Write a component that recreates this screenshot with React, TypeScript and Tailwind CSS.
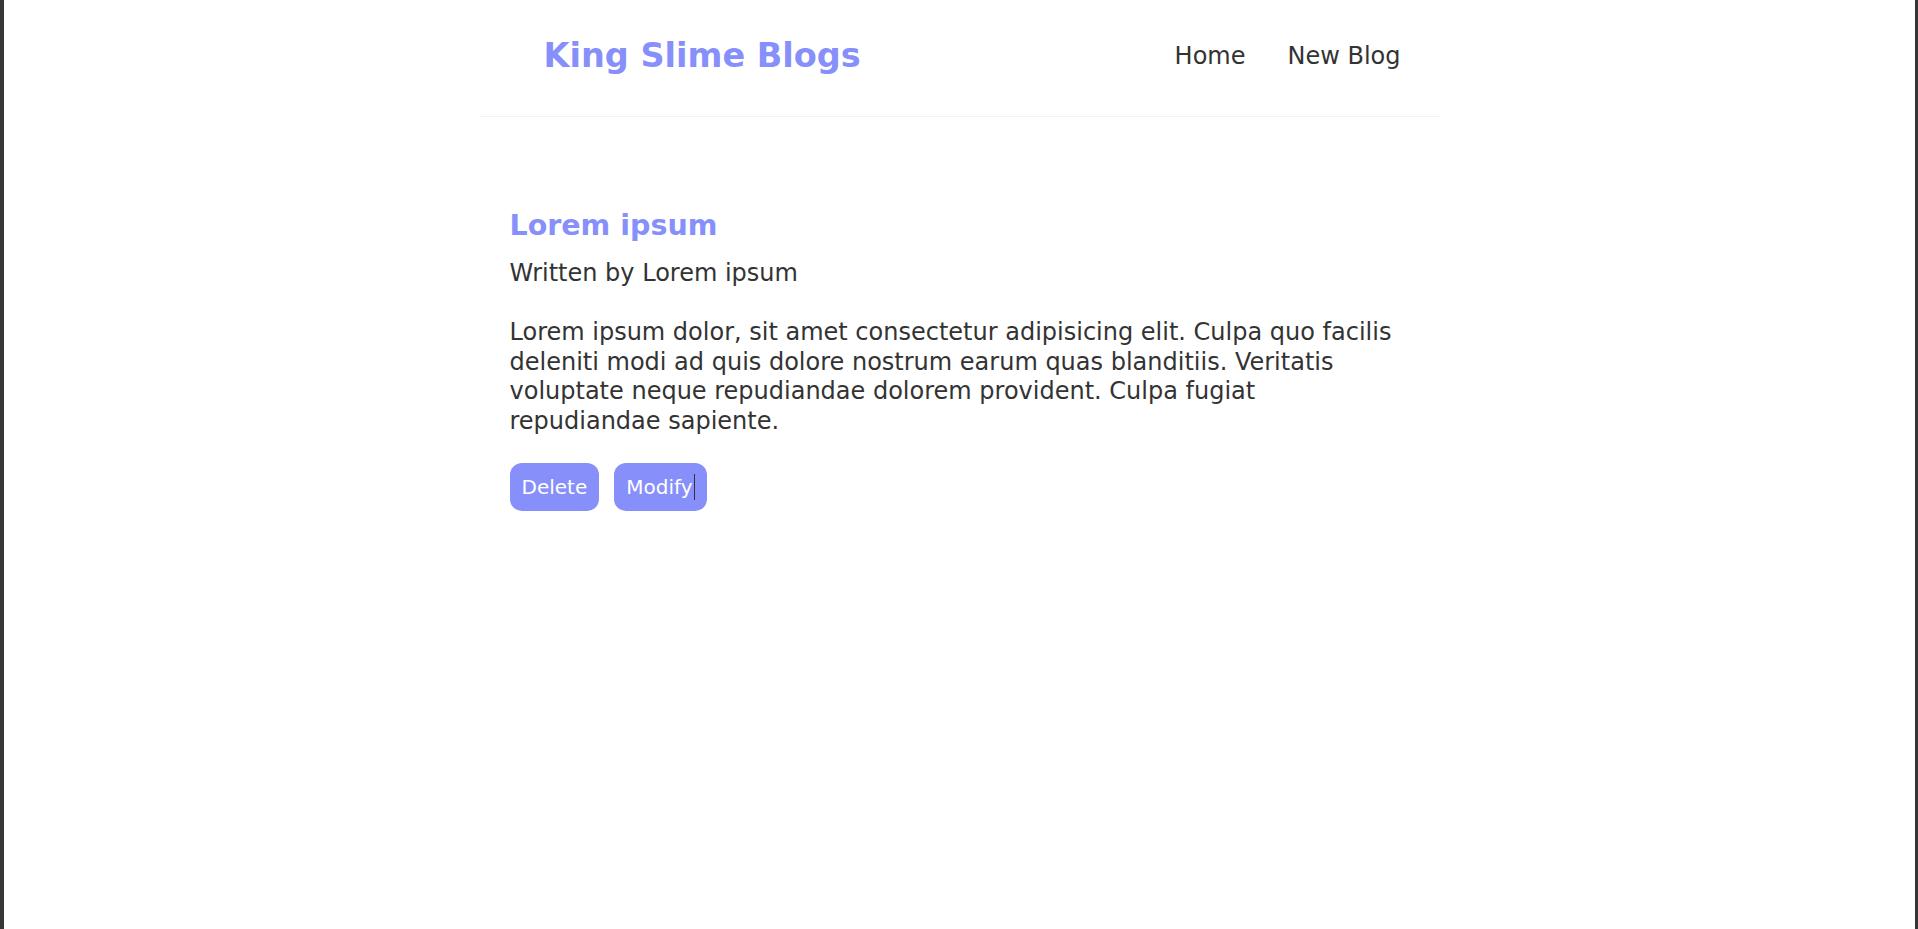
export default function App() {
  return (
    <div
      className="h-screen bg-white border-l-4 border-r-[3px] border-[#363636] text-[#333]"
      style={{ fontFamily: "'DejaVu Sans', Inter, sans-serif" }}
    >
      <nav className="mx-auto w-[960px] h-[117px] pb-[5px] flex items-center justify-between px-[30px] border-b border-[#f2f2f2]">
        <h1 className="ml-[34px] text-[33.5px] font-bold text-[#878ffa] leading-none">
          King Slime Blogs
        </h1>
        <div className="flex items-center">
          <a href="/" className="ml-[24px] px-[9px] text-[24px] text-[#333]">
            Home
          </a>
          <a href="/create" className="ml-[24px] px-[9px] text-[24px] text-[#333]">
            New Blog
          </a>
        </div>
      </nav>

      <div className="mx-auto w-[960px] px-[30px] pt-[91px]">
        <article>
          <h2 className="text-[28.5px] leading-[36px] font-bold text-[#878ffa] mb-[15px]">
            Lorem ipsum
          </h2>
          <p className="text-[24px] leading-[29px]">Written by Lorem ipsum</p>
          <div className="mt-[30px] mb-[27px] text-[24px] leading-[29.5px]">
            Lorem ipsum dolor, sit amet consectetur adipisicing elit. Culpa quo facilis
            <br />
            deleniti modi ad quis dolore nostrum earum quas blanditiis. Veritatis
            <br />
            voluptate neque repudiandae dolorem provident. Culpa fugiat
            <br />
            repudiandae sapiente.
          </div>
          <div className="flex gap-[15px]">
            <button className="h-[48px] px-[12px] rounded-[12px] bg-[#878ffa] text-white text-[20px]">
              Delete
            </button>
            <button className="h-[48px] px-[12px] rounded-[12px] bg-[#878ffa] text-white text-[20px] flex items-center">
              Modify
              <span className="ml-px w-px h-[26px] bg-[#333]" />
            </button>
          </div>
        </article>
      </div>
    </div>
  );
}
